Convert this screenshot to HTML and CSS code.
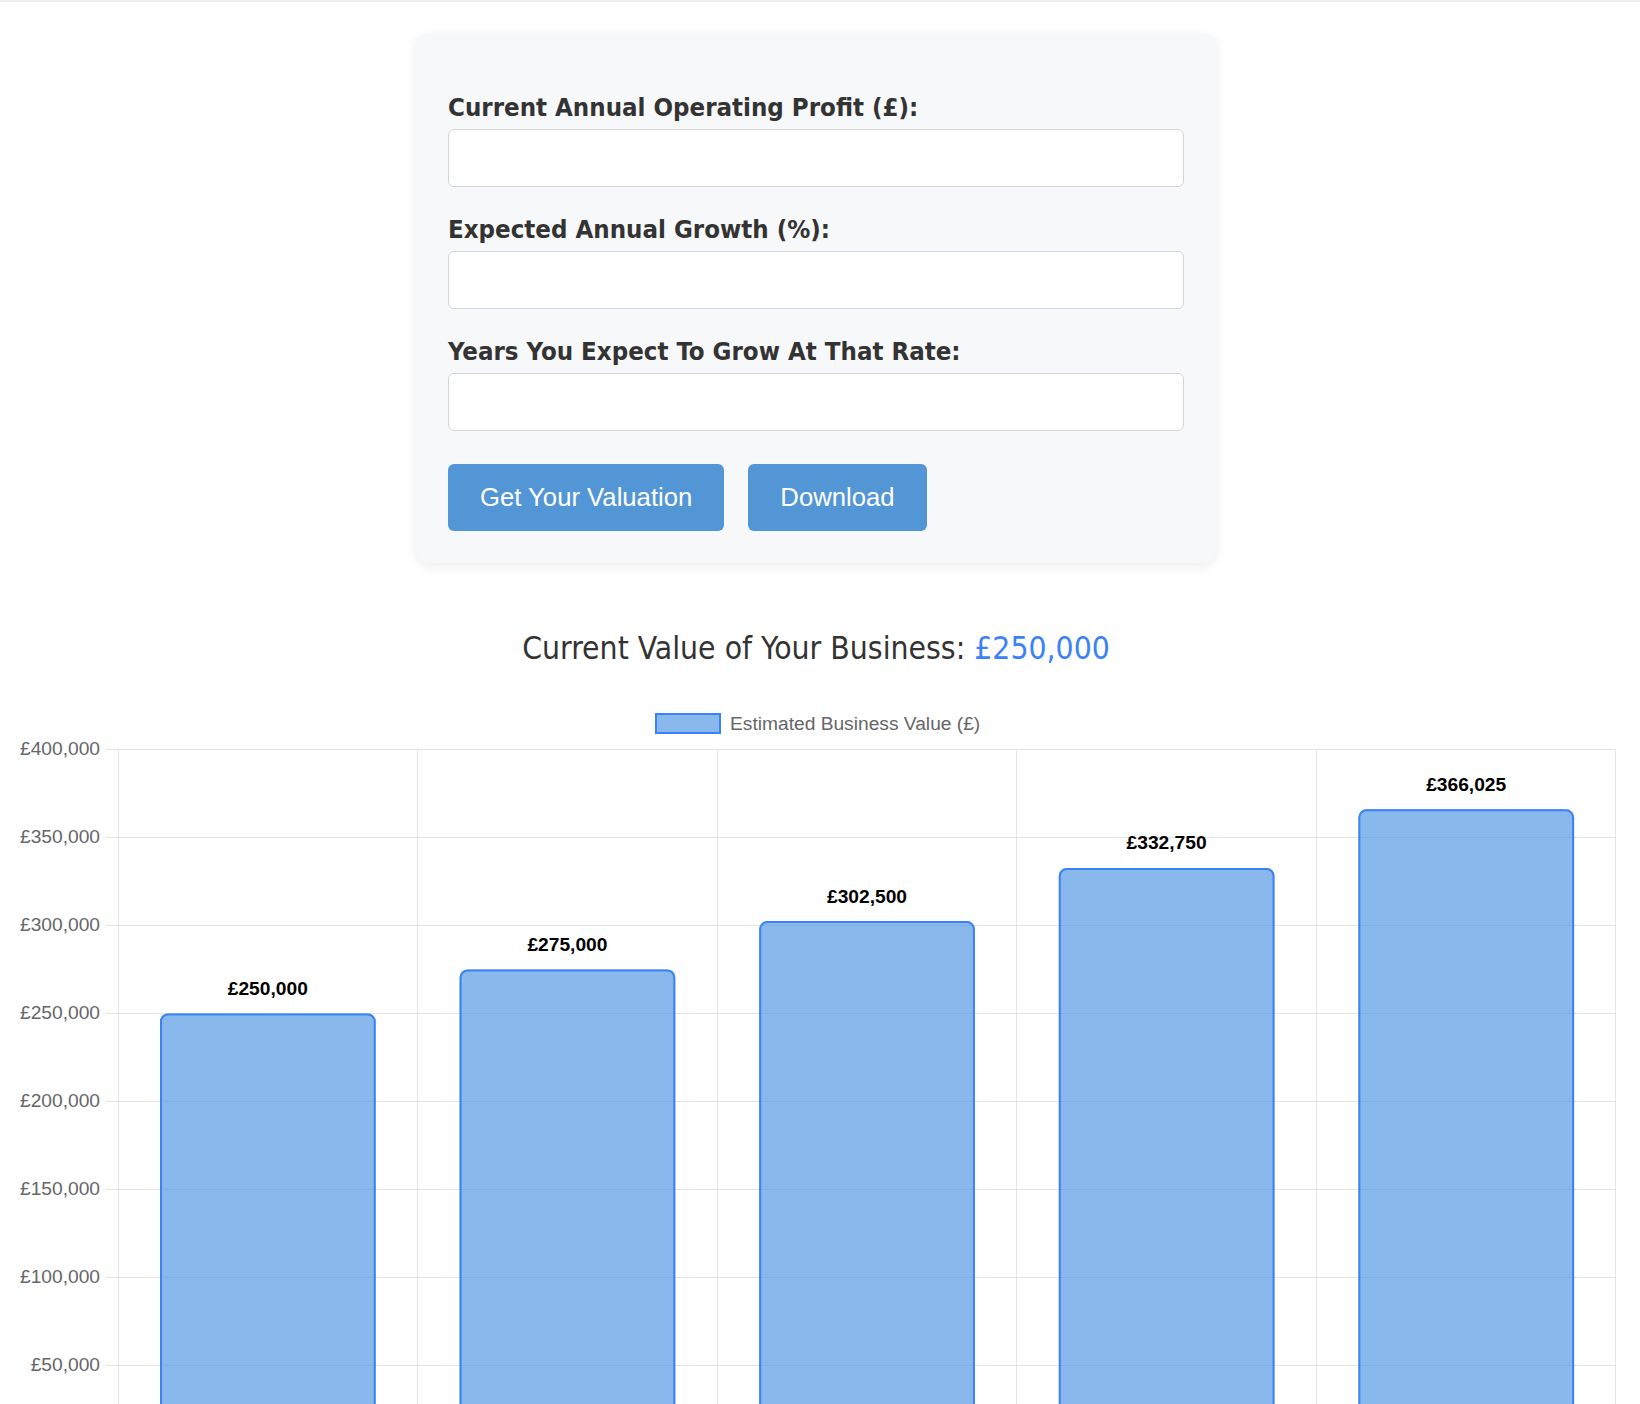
FILE: index.html
```html
<!DOCTYPE html>
<html lang="en">
<head>
<meta charset="utf-8">
<title>Business Valuation</title>
<link rel="stylesheet" href="styles.css">
</head>
<body>
<div class="topbar"></div>
<div class="page">
  <div class="card">
    <div class="field">
      <label class="label" for="profit">Current Annual Operating Profit (£):</label>
      <input class="input" id="profit" type="text">
    </div>
    <div class="field">
      <label class="label" for="growth">Expected Annual Growth (%):</label>
      <input class="input" id="growth" type="text">
    </div>
    <div class="field">
      <label class="label" for="years">Years You Expect To Grow At That Rate:</label>
      <input class="input" id="years" type="text">
    </div>
    <div class="actions">
      <button class="btn" type="button">Get Your Valuation</button>
      <button class="btn" type="button">Download</button>
    </div>
  </div>

  <h2 class="result">Current Value of Your Business: <span class="value">£250,000</span></h2>

  <svg class="chart" width="1616" height="740" viewBox="0 0 1616 740" xmlns="http://www.w3.org/2000/svg">
    <!-- legend -->
    <rect class="legend-box" x="648" y="45" width="64" height="19"></rect>
    <text class="legend-text" x="722" y="61">Estimated Business Value (£)</text>

    <!-- horizontal grid + ticks -->
    <g class="grid">
      <line x1="98" y1="80.5" x2="1608" y2="80.5"></line>
      <line x1="98" y1="168.5" x2="1608" y2="168.5"></line>
      <line x1="98" y1="256.5" x2="1608" y2="256.5"></line>
      <line x1="98" y1="344.5" x2="1608" y2="344.5"></line>
      <line x1="98" y1="432.5" x2="1608" y2="432.5"></line>
      <line x1="98" y1="520.5" x2="1608" y2="520.5"></line>
      <line x1="98" y1="608.5" x2="1608" y2="608.5"></line>
      <line x1="98" y1="696.5" x2="1608" y2="696.5"></line>
      <line x1="110.5" y1="80" x2="110.5" y2="740"></line>
      <line x1="409.5" y1="80" x2="409.5" y2="740"></line>
      <line x1="709.5" y1="80" x2="709.5" y2="740"></line>
      <line x1="1008.5" y1="80" x2="1008.5" y2="740"></line>
      <line x1="1308.5" y1="80" x2="1308.5" y2="740"></line>
      <line x1="1607.5" y1="80" x2="1607.5" y2="740"></line>
    </g>

    <!-- y labels -->
    <g class="ytick">
      <text x="92" y="86">£400,000</text>
      <text x="92" y="174">£350,000</text>
      <text x="92" y="262">£300,000</text>
      <text x="92" y="350">£250,000</text>
      <text x="92" y="438">£200,000</text>
      <text x="92" y="526">£150,000</text>
      <text x="92" y="614">£100,000</text>
      <text x="92" y="702">£50,000</text>
    </g>

    <!-- bars -->
    <g class="bar-fill">
      <path d="M152 790 V352.5 A8 8 0 0 1 160 344.5 H359.7 A8 8 0 0 1 367.7 352.5 V790 Z"></path>
      <path d="M451.6 790 V308.5 A8 8 0 0 1 459.6 300.5 H659.3 A8 8 0 0 1 667.3 308.5 V790 Z"></path>
      <path d="M751.2 790 V260.1 A8 8 0 0 1 759.2 252.1 H958.9 A8 8 0 0 1 966.9 260.1 V790 Z"></path>
      <path d="M1050.8 790 V206.9 A8 8 0 0 1 1058.8 198.9 H1258.5 A8 8 0 0 1 1266.5 206.9 V790 Z"></path>
      <path d="M1350.4 790 V148.3 A8 8 0 0 1 1358.4 140.3 H1558.1 A8 8 0 0 1 1566.1 148.3 V790 Z"></path>
    </g>
    <g class="bar-stroke">
      <path d="M153 790 V352.5 A7 7 0 0 1 160 345.5 H359.7 A7 7 0 0 1 366.7 352.5 V790"></path>
      <path d="M452.6 790 V308.5 A7 7 0 0 1 459.6 301.5 H659.3 A7 7 0 0 1 666.3 308.5 V790"></path>
      <path d="M752.2 790 V260.1 A7 7 0 0 1 759.2 253.1 H958.9 A7 7 0 0 1 965.9 260.1 V790"></path>
      <path d="M1051.8 790 V206.9 A7 7 0 0 1 1058.8 199.9 H1258.5 A7 7 0 0 1 1265.5 206.9 V790"></path>
      <path d="M1351.4 790 V148.3 A7 7 0 0 1 1358.4 141.3 H1558.1 A7 7 0 0 1 1565.1 148.3 V790"></path>
    </g>

    <!-- data labels -->
    <g class="data-label">
      <text x="259.8" y="326">£250,000</text>
      <text x="559.4" y="282">£275,000</text>
      <text x="859" y="233.6">£302,500</text>
      <text x="1158.6" y="180.4">£332,750</text>
      <text x="1458.2" y="121.8">£366,025</text>
    </g>
  </svg>
</div>
</body>
</html>
```

FILE: styles.css
```css
html, body {
  margin: 0;
  padding: 0;
  background: #ffffff;
}

body {
  font-family: "DejaVu Sans Condensed", "DejaVu Sans", sans-serif;
  font-stretch: condensed;
  color: #333333;
  overflow: hidden;
}

.topbar {
  height: 2px;
  background: #eeeeee;
}

.page {
  margin: 0 16px 0 8px;
}

.card {
  width: 800px;
  box-sizing: border-box;
  margin: 31px auto 0;
  padding: 32px 32px 32px;
  background: #f7f8fa;
  border-radius: 13px;
  box-shadow: 0 3px 12px rgba(0, 0, 0, 0.08);
}

.field {
  display: block;
}

.label {
  display: block;
  margin: 27px 0 7px;
  font-family: "DejaVu Sans Condensed", "DejaVu Sans", sans-serif;
  font-stretch: condensed;
  font-weight: bold;
  font-size: 25.6px;
  line-height: 30px;
  color: #333333;
}

.input {
  display: block;
  width: 100%;
  height: 58px;
  box-sizing: border-box;
  margin: 0;
  padding: 0 14px;
  border: 1px solid #d2d4d8;
  border-radius: 6px;
  background: #ffffff;
  font-size: 22px;
  outline: none;
}

.actions {
  display: flex;
  gap: 24px;
  margin-top: 33px;
}

.btn {
  height: 67px;
  padding: 0 32px;
  border: none;
  border-radius: 6px;
  background: #5396d6;
  color: #ffffff;
  font-family: "Liberation Sans", Arial, sans-serif;
  font-size: 25.7px;
  line-height: 67px;
  cursor: pointer;
}

.result {
  margin: 65px 0 0;
  font-family: "DejaVu Sans Condensed", "DejaVu Sans", sans-serif;
  font-stretch: condensed;
  font-weight: normal;
  font-size: 31.6px;
  line-height: 40px;
  text-align: center;
  color: #333333;
}

.value {
  color: #3b82f6;
}

.chart {
  display: block;
  margin-top: 1px;
}

.legend-box {
  fill: rgba(74, 148, 226, 0.65);
  stroke: #3b82f6;
  stroke-width: 2;
}

.legend-text {
  font-family: "Liberation Sans", Arial, sans-serif;
  font-size: 19.2px;
  fill: #666666;
}

.grid line {
  stroke: #e3e3e3;
  stroke-width: 1;
}

.ytick text {
  font-family: "Liberation Sans", Arial, sans-serif;
  font-size: 19.2px;
  fill: #666666;
  text-anchor: end;
}

.bar-fill path {
  fill: rgba(74, 148, 226, 0.65);
}

.bar-stroke path {
  fill: none;
  stroke: #3b82f6;
  stroke-width: 2;
}

.data-label text {
  font-family: "Liberation Sans", Arial, sans-serif;
  font-size: 19.2px;
  font-weight: bold;
  fill: #000000;
  text-anchor: middle;
}
```
